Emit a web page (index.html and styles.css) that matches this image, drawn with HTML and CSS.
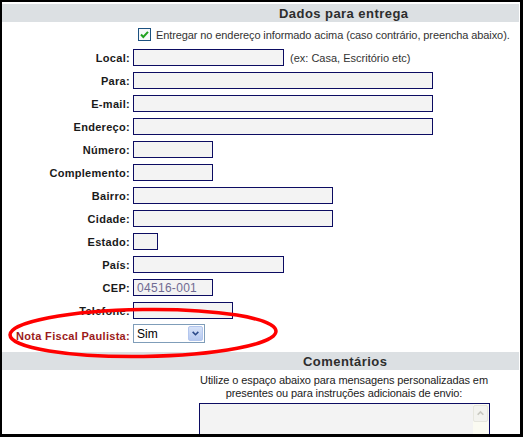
FILE: index.html
```html
<!DOCTYPE html>
<html lang="pt-BR">
<head>
<meta charset="utf-8">
<title>Dados para entrega</title>
<link rel="stylesheet" href="styles.css">
</head>
<body>
<div class="frame">
  <div class="section-head"><span class="head-text">Dados para entrega</span></div>
  <div class="check-row">
    <span class="checkbox">
      <svg width="13" height="13" viewBox="0 0 13 13"><rect x="0.5" y="0.5" width="12" height="12" fill="#f6f8fa" stroke="#1c5180"/><path d="M3 6.5 L5.3 9 L10 3.8" fill="none" stroke="#21a121" stroke-width="2"/></svg>
    </span>
    <span class="check-text">Entregar no endereço informado acima (caso contrário, preencha abaixo).</span>
  </div>
  <div class="form">
    <label class="lbl">Local:</label><div class="fld"><input class="inp w150" type="text"><span class="hint">(ex: Casa, Escritório etc)</span></div>
    <label class="lbl">Para:</label><div class="fld"><input class="inp w300" type="text"></div>
    <label class="lbl">E-mail:</label><div class="fld"><input class="inp w300" type="text"></div>
    <label class="lbl">Endereço:</label><div class="fld"><input class="inp w300" type="text"></div>
    <label class="lbl">Número:</label><div class="fld"><input class="inp w80" type="text"></div>
    <label class="lbl">Complemento:</label><div class="fld"><input class="inp w80" type="text"></div>
    <label class="lbl">Bairro:</label><div class="fld"><input class="inp w200" type="text"></div>
    <label class="lbl">Cidade:</label><div class="fld"><input class="inp w200" type="text"></div>
    <label class="lbl">Estado:</label><div class="fld"><input class="inp w25" type="text"></div>
    <label class="lbl">País:</label><div class="fld"><input class="inp w150" type="text"></div>
    <label class="lbl">CEP:</label><div class="fld"><input class="inp w80 cep" type="text" value="04516-001"></div>
    <label class="lbl">Telefone:</label><div class="fld"><input class="inp w100" type="text"></div>
    <label class="lbl lbl-red nf">Nota Fiscal Paulista:</label>
    <div class="fld nf">
      <div class="select">
        <span class="select-val">Sim</span>
        <span class="select-btn">
          <svg width="15" height="16" viewBox="0 0 15 16"><path d="M4 6 L7.5 9.5 L11 6" fill="none" stroke="#2b4a8a" stroke-width="2"/></svg>
        </span>
      </div>
    </div>
  </div>
  <div class="section-head"><span class="head-text head-c">Comentários</span></div>
  <p class="help">Utilize o espaço abaixo para mensagens personalizadas em<br>presentes ou para instruções adicionais de envio:</p>
  <div class="textarea">
    <div class="scrollbar">
      <span class="sb-btn">
        <svg width="15" height="16" viewBox="0 0 15 16"><path d="M4 9.5 L7.5 6 L11 9.5" fill="none" stroke="#c8c8c0" stroke-width="2"/></svg>
      </span>
    </div>
  </div>
  <svg class="ellipse" width="280" height="58" viewBox="0 0 280 58">
    <ellipse cx="138" cy="28" rx="133" ry="23.5" fill="none" stroke="#f00" stroke-width="3.5" transform="rotate(-0.8 138 28)"/>
  </svg>
</div>
</body>
</html>
```

FILE: styles.css
```css
* { box-sizing: border-box; }
html, body { margin: 0; padding: 0; background: #fff; }
body {
  font-family: "Liberation Sans", Arial, sans-serif;
  font-size: 11px;
  color: #222;
}
.frame {
  position: relative;
  width: 523px;
  height: 437px;
  overflow: hidden;
  border-left: 2px solid #000;
  border-top: 2px solid #000;
  border-right: 3px solid #000;
  border-bottom: 3px solid #000;
  padding: 2px 1px 0 0;
  background: #fff;
}
.section-head {
  height: 18px;
  background: #dce0e3;
  display: flex;
  align-items: center;
}
.head-text {
  font-weight: bold;
  font-size: 13px;
  letter-spacing: 0.45px;
  color: #2d2d2d;
  padding-left: 277px;
}
.head-text.head-c { padding-left: 301px; }
.check-row {
  height: 24px;
  display: flex;
  align-items: center;
  padding-left: 136px;
  padding-top: 1px;
}
.checkbox { display: flex; width: 13px; height: 13px; }
.check-text { margin-left: 5px; color: #333; letter-spacing: -0.1px; }
.form {
  display: grid;
  grid-template-columns: 128px 1fr;
  grid-template-rows: repeat(12, 23px) 30px;
  column-gap: 3px;
}
.lbl {
  font-weight: bold;
  letter-spacing: 0.3px;
  text-align: right;
  align-self: center;
  color: #1a1a1a;
  white-space: nowrap;
}
.lbl-red { color: #9b1a1a; }
.fld { display: flex; align-items: center; }
.inp {
  height: 17px;
  border: 1px solid #0c0c62;
  background: #f3f3f3;
  padding: 0 2px;
  margin: 0;
  font-family: "Liberation Sans", Arial, sans-serif;
  font-size: 12px;
  outline: none;
}
.w25 { width: 25px; }
.w80 { width: 80px; }
.w100 { width: 100px; }
.w150 { width: 151px; }
.w200 { width: 200px; }
.w300 { width: 300px; }
.cep { color: #6f6a92; font-size: 12px; letter-spacing: 0.3px; padding-left: 3px; }
.hint { margin-left: 6px; color: #333; }
.lbl.nf { align-self: start; display: flex; align-items: center; justify-content: flex-end; height: 23px; margin-top: 2px; }
.fld.nf { align-items: flex-start; padding-top: 2px; }
.select {
  width: 72px;
  height: 19px;
  border: 1px solid #7f9db9;
  background: #fff;
  display: flex;
  align-items: center;
  justify-content: space-between;
  padding: 0 1px 0 3px;
  font-size: 12px;
  color: #000;
}
.select-btn {
  width: 15px;
  height: 15px;
  background: linear-gradient(#d6e2f8, #b6c9f0);
  border: 1px solid #b3c6ee;
  border-radius: 2px;
  display: flex;
  align-items: center;
  justify-content: center;
}
.select-btn svg { width: 13px; height: 13px; }
.help {
  margin: 4px 0 0;
  text-align: center;
  padding-left: 167px;
  line-height: 13px;
  color: #222;
  font-size: 11px;
  letter-spacing: -0.1px;
}
.textarea {
  margin: 3px 0 0 197px;
  width: 291px;
  height: 60px;
  border: 1px solid #0c0c62;
  background: #f3f3f3;
  display: flex;
  justify-content: flex-end;
}
.scrollbar {
  width: 16px;
  background: #fbfbf2;
  padding-top: 1px;
}
.sb-btn {
  display: flex;
  width: 15px;
  height: 17px;
  border: 1px solid #e6e6de;
  border-radius: 2px;
  background: #f3f3ef;
  align-items: center;
  justify-content: center;
}
.sb-btn svg { width: 13px; height: 13px; }
.ellipse {
  position: absolute;
  left: 3px;
  top: 303px;
  pointer-events: none;
}
```
